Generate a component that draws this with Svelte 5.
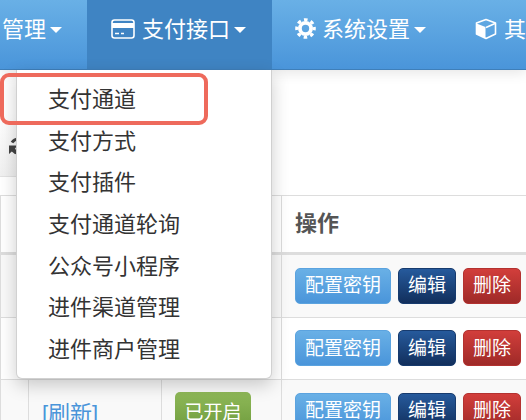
<script>
    const menuItems = ['支付通道', '支付方式', '支付插件', '支付通道轮询', '公众号小程序', '进件渠道管理', '进件商户管理'];
</script>

<div class="page">
    <nav class="navbar">
        <a class="nav-item first">管理<span class="caret"></span></a>
        <a class="nav-item active">
            <svg class="icon" width="24" height="20" viewBox="0 0 24 20">
                <rect x="1" y="1" width="22" height="18" rx="2.5" fill="none" stroke="#fff" stroke-width="1.6" />
                <rect x="1" y="4" width="22" height="5" fill="#fff" />
                <path d="M4 14.5h4M10 14.5h3" stroke="#fff" stroke-width="1.4" />
            </svg>
            支付接口<span class="caret"></span>
        </a>
        <a class="nav-item settings">
            <svg class="icon" width="21" height="21" viewBox="0 0 21 21">
                <circle cx="10.5" cy="10.5" r="5.6" fill="none" stroke="#fff" stroke-width="3.8" />
                <circle cx="10.5" cy="10.5" r="8.8" fill="none" stroke="#fff" stroke-width="3" stroke-dasharray="3.6 3.31" stroke-dashoffset="1.8" />
            </svg>
            系统设置<span class="caret"></span>
        </a>
        <a class="nav-item other">
            <svg class="icon" width="22" height="22" viewBox="0 0 22 22">
                <path d="M11 1.5 20.5 5v11L11 20.5 1.5 16V5z" fill="none" stroke="#fff" stroke-width="1.6" stroke-linejoin="round" />
                <path d="M1.5 5.5 10.5 9v11.5L1.5 16z" fill="#fff" />
                <path d="M11 9.5 20 5.5" stroke="#fff" stroke-width="1.4" />
            </svg>
            其他
        </a>
    </nav>

    <div class="toolbar">
        <div class="refresh-btn">
            <svg width="20" height="20" viewBox="0 0 20 20">
                <path d="M16.5 5.5A8 8 0 0 0 4 6.5" fill="none" stroke="#444" stroke-width="3" />
                <path d="M1 9.5 1 18l2.8-2.6A8 8 0 0 0 12 18l2-3a5 5 0 0 1-7-2.5L9.5 9.5z" fill="#444" />
            </svg>
        </div>
    </div>

    <div class="table">
        <div class="row head">
            <div class="cell"></div>
            <div class="cell"></div>
            <div class="cell"></div>
            <div class="cell ops">操作</div>
        </div>
        {#each [0, 1, 2] as r}
            <div class="row" class:striped={r !== 1}>
                <div class="cell"></div>
                <div class="cell">
                    {#if r === 2}<a class="link">[刷新]</a>{/if}
                </div>
                <div class="cell">
                    {#if r === 2}<span class="label">已开启</span>{/if}
                </div>
                <div class="cell actions">
                    <button class="btn blue">配置密钥</button>
                    <button class="btn navy">编辑</button>
                    <button class="btn red">删除</button>
                </div>
            </div>
        {/each}
    </div>

    <ul class="dropdown">
        {#each menuItems as item}
            <li>{item}</li>
        {/each}
    </ul>

    <div class="highlight"></div>
</div>

<style>
    :global(body) {
        margin: 0;
    }

    .page {
        position: relative;
        width: 526px;
        height: 420px;
        overflow: hidden;
        background: #fff;
        color: #333;
        font-family: "Liberation Sans", "Noto Sans CJK SC", sans-serif;
    }

    .navbar {
        position: relative;
        z-index: 1;
        display: flex;
        height: 70px;
        box-sizing: border-box;
        background: linear-gradient(to bottom, #69b0e6, #4a95da);
        border-bottom: 1px solid #3f7fb9;
        box-shadow: 0 3px 12px rgba(0, 0, 0, 0.1);
    }

    .nav-item {
        display: flex;
        align-items: center;
        flex: none;
        box-sizing: border-box;
        height: 69px;
        color: #fff;
        font-size: 22px;
        white-space: nowrap;
        padding-bottom: 15px;
    }

    .first {
        width: 87px;
        padding-left: 2px;
    }

    .active {
        width: 185px;
        padding-left: 24px;
        background: #3f84c3;
    }

    .settings {
        width: 180px;
        padding-left: 23px;
    }

    .settings .icon {
        margin-right: 6px;
    }

    .other {
        padding-left: 23px;
    }

    .icon {
        flex: none;
        margin-top: 3px;
        margin-right: 7px;
    }

    .caret {
        width: 0;
        height: 0;
        margin-left: 4px;
        margin-top: 6px;
        border-top: 6px solid #fff;
        border-left: 6px solid transparent;
        border-right: 6px solid transparent;
    }

    .toolbar {
        height: 125px;
    }

    .refresh-btn {
        display: flex;
        align-items: flex-end;
        width: 16px;
        height: 107px;
        box-sizing: border-box;
        padding: 0 0 20px 8px;
        border-bottom: 1px solid #e2e2e2;
        background: linear-gradient(to bottom, #fff 40%, #f0f0f0);
    }

    .refresh-btn svg {
        flex: none;
    }

    .table {
        border-top: 1px solid #ddd;
    }

    .row {
        display: grid;
        grid-template-columns: 28px 133px 120px 1fr;
        height: 62.5px;
        box-sizing: border-box;
        border-bottom: 1px solid #ddd;
    }

    .row.head {
        height: 59px;
        border-bottom: 3px solid #ddd;
    }

    .striped {
        background: #f9f9f9;
    }

    .cell {
        display: flex;
        align-items: center;
        box-sizing: border-box;
        border-left: 1px solid #ddd;
        min-width: 0;
    }

    .ops {
        padding-left: 13px;
        padding-bottom: 6px;
        font-size: 22px;
        font-weight: 700;
        color: #555;
    }

    .actions {
        gap: 7px;
        padding-left: 13px;
    }

    .btn {
        height: 36px;
        padding: 0;
        border: 1px solid;
        border-radius: 5px;
        color: #fff;
        font-family: inherit;
        font-size: 19px;
        line-height: 1;
    }

    .blue {
        width: 96px;
        background: linear-gradient(to bottom, #69b0e6, #4a95da);
        border-color: #5ba3df;
    }

    .navy {
        width: 58px;
        background: linear-gradient(to bottom, #265a9c, #122f5c);
        border-color: #173b6e;
    }

    .red {
        width: 58px;
        background: linear-gradient(to bottom, #d23e3b, #9f2a28);
        border-color: #b33230;
    }

    .link {
        margin-left: 13px;
        color: #4a95da;
        font-size: 22px;
    }

    .label {
        margin-left: 13px;
        width: 76px;
        height: 38px;
        display: flex;
        align-items: center;
        justify-content: center;
        border-radius: 5px;
        color: #fff;
        font-size: 19px;
        background: linear-gradient(to bottom, #8fb958, #6f9c3e);
    }

    .dropdown {
        position: absolute;
        z-index: 2;
        top: 70px;
        left: 16px;
        width: 256px;
        height: 309px;
        box-sizing: border-box;
        margin: 0;
        padding: 9px 0 0;
        list-style: none;
        background: #fff;
        border: 1px solid rgba(0, 0, 0, 0.18);
        border-top: 0;
        border-radius: 0 0 6px 6px;
        box-shadow: 0 6px 18px rgba(0, 0, 0, 0.2);
    }

    .dropdown li {
        height: 41.67px;
        line-height: 41.67px;
        padding-left: 31px;
        font-size: 22px;
        color: #333;
    }

    .highlight {
        position: absolute;
        z-index: 3;
        top: 73px;
        left: 0;
        width: 208px;
        height: 52px;
        box-sizing: border-box;
        border: 4px solid #ee6a5c;
        border-radius: 9px;
    }
</style>
